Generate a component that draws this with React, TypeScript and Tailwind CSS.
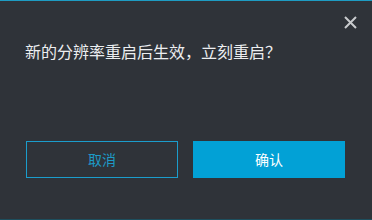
import React from 'react';

export default function App(): React.ReactElement {
  return (
    <div
      className="w-[372px] h-[220px] bg-[#2f3339] border-t border-[#1e9cc3] border-b border-b-[#1d4f5e] flex flex-col"
      style={{ fontFamily: '"Noto Sans CJK SC", "Microsoft YaHei", sans-serif' }}
    >
      <div className="flex justify-end pt-[13px] pr-[14px] h-[40px]">
        <button className="w-[16px] h-[16px] flex items-center justify-center text-[#c9cbce]">
          <svg width="13" height="13" viewBox="0 0 13 13" fill="none" stroke="currentColor" strokeWidth="2">
            <path d="M1 1 L12 12 M12 1 L1 12" />
          </svg>
        </button>
      </div>
      <p className="pl-[25px] text-[16px] leading-[24px] text-[#eceef0] -mt-[2px]">
        新的分辨率重启后生效，立刻重启？
      </p>
      <div className="flex gap-[15px] pl-[26px] mt-[78px]">
        <button className="w-[152px] h-[37px] border border-[#1b9dcc] text-[#1d9ac6] text-[14px]">
          取消
        </button>
        <button className="w-[152px] h-[37px] bg-[#02a1d6] text-white text-[14px]">
          确认
        </button>
      </div>
    </div>
  );
}
